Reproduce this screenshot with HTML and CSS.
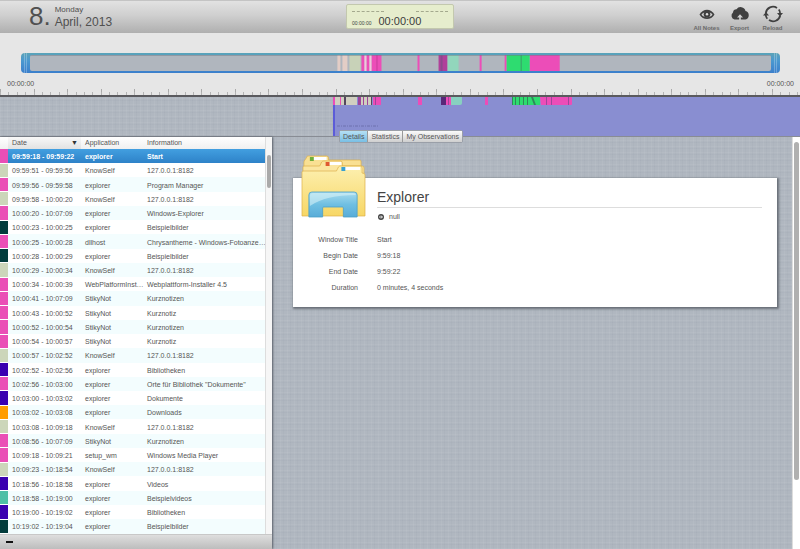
FILE: index.html
```html
<!DOCTYPE html>
<html lang="en">
<head>
<meta charset="utf-8">
<title>KnowSelf</title>
<link rel="stylesheet" href="styles.css">
</head>
<body>
<header class="topbar">
  <div class="date">
    <span class="day">8.</span>
    <div class="date-text"><span class="weekday">Monday</span><span class="month">April, 2013</span></div>
  </div>
  <div class="clock">
    <div class="dashes"><i></i><i></i></div>
    <div class="times"><small>00:00:00</small><span>00:00:00</span></div>
  </div>
  <nav class="actions">
    <button type="button">
      <svg viewBox="0 0 20 20"><path d="M2.500 10.500C6 4 14 4 17.500 10.500C14 16.500 6 16.500 2.500 10.500Z" fill="#404040"/><path d="M4.500 10.500C6.500 7 13.500 7 15.500 10.500C13.500 14 6.500 14 4.500 10.500Z" fill="#d2d2d2"/><circle cx="10" cy="10.300" r="3.300" fill="#404040"/><circle cx="10" cy="10.300" r="1.200" fill="#ddd"/></svg>
      All Notes
    </button>
    <button type="button">
      <svg viewBox="0 0 20 20"><path d="M4.500 15.500A4 4 0 0 1 3 8.500A3.600 3.600 0 0 1 6.500 5.300A5 5 0 0 1 15.500 7A4.400 4.400 0 0 1 15.500 15.500Z" fill="#404040"/><path d="M9.200 16V13.500H7L10 10.300L13 13.500H10.800V16Z" fill="#d0d0d0"/></svg>
      Export
    </button>
    <button type="button">
      <svg viewBox="0 0 20 20"><g fill="none" stroke="#404040" stroke-width="1.800"><path d="M2.800 9A7.300 7.300 0 0 1 14 3.900"/><path d="M15.800 5.500A7.300 7.300 0 0 1 17.200 10"/><path d="M17.200 11.500A7.300 7.300 0 0 1 6 16.100"/><path d="M4.300 14.700A7.300 7.300 0 0 1 2.700 11"/></g><path d="M14 9H20L17 12.500ZM0 11.500H6L3 8Z" fill="#404040"/></svg>
      Reload
    </button>
  </nav>
</header>

<section class="range">
  <div class="range-bar">
    <svg viewBox="0 0 740 16" preserveAspectRatio="none">
      <path fill="#e3cdc6" d="M307 0h3v16h-3zM312 0h5v16h-5z"/>
      <path fill="#c8d2b8" d="M319 0h11v16h-11z"/>
      <path fill="#ec4db8" d="M331 0h3v16h-3zM336 0h3v16h-3zM341 0h10v16h-10zM387 0h2v16h-2zM449 0h2v16h-2zM474 0h2v16h-2zM499 0h30v16h-30z"/>
      <path fill="#f0c6dc" d="M334 0h2v16h-2zM339 0h2v16h-2z"/>
      <path fill="#b0409a" d="M408 0h9v16h-9z"/>
      <path fill="#8a4a8c" d="M410 0h2v16h-2z"/>
      <path fill="#c73c9c" d="M346 0h1v16h-1z"/>
      <path fill="#92d6bc" d="M417 0h11v16h-11z"/>
      <path fill="#2edc70" d="M476 0h23v16h-23z"/>
      <path fill="#3c9c68" d="M490 0h1v16h-1z"/>
      <path fill="#6c7480" opacity=".45" d="M0 0h740v1h-740z"/>
    </svg>
  </div>
  <div class="range-labels"><span>00:00:00</span><span>00:00:00</span></div>
  <svg class="ticks" viewBox="0 0 800 7" preserveAspectRatio="none" shape-rendering="crispEdges">
    <path d="M0 3.500H800" stroke="#aaa" stroke-width="7" stroke-dasharray="1 32.560"/>
    <path d="M0 5H800" stroke="#b4b4b4" stroke-width="4" stroke-dasharray="1 7.390"/>
  </svg>
</section>

<section class="track">
  <svg viewBox="0 0 800 39" preserveAspectRatio="none">
    <path fill="#898ed1" d="M333 0h467v39h-467z"/>
    <path fill="#5c5cd8" d="M333 0h2v39h-2z"/>
    <path fill="#d0cfc0" d="M335 0h5v8h-5zM341 0h3v8h-3zM346 0h11v8h-11zM361 0h11v8h-11z"/>
    <path fill="#ec4db8" d="M333 0h2v8h-2zM340 0h1v8h-1zM373 0h8v8h-8zM418 0h4v8h-4zM446 0h5v8h-5zM485 0h3v8h-3zM540 0h32v7q0 1-1 1h-30z"/>
    <path fill="#a0449c" d="M358 0h3v8h-3zM363 0h1v8h-1zM367 0h1v8h-1zM375 0h1v8h-1zM448 0h1v8h-1zM546 0h1v8h-1zM551 0h1v8h-1zM568 0h1v8h-1z"/>
    <path fill="#55455f" d="M344 0h2v8h-2zM371 0h1v8h-1z"/>
    <path fill="#582878" d="M441 0h5v8h-5z"/>
    <path fill="#88d0c0" d="M451 0h11v6q0 2-2 2h-9z"/>
    <path fill="#2edc70" d="M512 0h28v8h-28z"/>
    <path fill="#30885a" d="M512 0h1v8h-1zM515 0h1v8h-1zM519 0h1v8h-1zM523 0h1v8h-1zM527 0h1v8h-1zM531 0h2l3 8h-2z"/>
    <path d="M337 29H378" stroke="#6c70ae" stroke-dasharray="3 1 1 1"/>
  </svg>
</section>

<main class="content">
  <section class="list">
    <div class="list-body">
      <table>
        <colgroup><col class="c-color"><col class="c-date"><col class="c-app"><col></colgroup>
        <thead><tr><th></th><th class="sorted">Date <span>▼</span></th><th>Application</th><th>Information</th></tr></thead>
        <tbody>
          <tr class="selected"><td class="pink"></td><td>09:59:18 - 09:59:22</td><td>explorer</td><td>Start</td></tr>
          <tr><td class="sage"></td><td>09:59:51 - 09:59:56</td><td>KnowSelf</td><td>127.0.0.1:8182</td></tr>
          <tr><td class="pink"></td><td>09:59:56 - 09:59:58</td><td>explorer</td><td>Program Manager</td></tr>
          <tr><td class="sage"></td><td>09:59:58 - 10:00:20</td><td>KnowSelf</td><td>127.0.0.1:8182</td></tr>
          <tr><td class="pink"></td><td>10:00:20 - 10:07:09</td><td>explorer</td><td>Windows-Explorer</td></tr>
          <tr><td class="dark"></td><td>10:00:23 - 10:00:25</td><td>explorer</td><td>Beispielbilder</td></tr>
          <tr><td class="pink"></td><td>10:00:25 - 10:00:28</td><td>dllhost</td><td>Chrysantheme - Windows-Fotoanze…</td></tr>
          <tr><td class="dark"></td><td>10:00:28 - 10:00:29</td><td>explorer</td><td>Beispielbilder</td></tr>
          <tr><td class="sage"></td><td>10:00:29 - 10:00:34</td><td>KnowSelf</td><td>127.0.0.1:8182</td></tr>
          <tr><td class="pink"></td><td>10:00:34 - 10:00:39</td><td>WebPlatformInst…</td><td>Webplattform-Installer 4.5</td></tr>
          <tr><td class="pink"></td><td>10:00:41 - 10:07:09</td><td>StikyNot</td><td>Kurznotizen</td></tr>
          <tr><td class="pink"></td><td>10:00:43 - 10:00:52</td><td>StikyNot</td><td>Kurznotiz</td></tr>
          <tr><td class="pink"></td><td>10:00:52 - 10:00:54</td><td>StikyNot</td><td>Kurznotizen</td></tr>
          <tr><td class="pink"></td><td>10:00:54 - 10:00:57</td><td>StikyNot</td><td>Kurznotiz</td></tr>
          <tr><td class="sage"></td><td>10:00:57 - 10:02:52</td><td>KnowSelf</td><td>127.0.0.1:8182</td></tr>
          <tr><td class="indigo"></td><td>10:02:52 - 10:02:56</td><td>explorer</td><td>Bibliotheken</td></tr>
          <tr><td class="pink"></td><td>10:02:56 - 10:03:00</td><td>explorer</td><td>Orte für Bibliothek "Dokumente"</td></tr>
          <tr><td class="indigo"></td><td>10:03:00 - 10:03:02</td><td>explorer</td><td>Dokumente</td></tr>
          <tr><td class="orange"></td><td>10:03:02 - 10:03:08</td><td>explorer</td><td>Downloads</td></tr>
          <tr><td class="sage"></td><td>10:03:08 - 10:09:18</td><td>KnowSelf</td><td>127.0.0.1:8182</td></tr>
          <tr><td class="pink"></td><td>10:08:56 - 10:07:09</td><td>StikyNot</td><td>Kurznotizen</td></tr>
          <tr><td class="pink"></td><td>10:09:18 - 10:09:21</td><td>setup_wm</td><td>Windows Media Player</td></tr>
          <tr><td class="sage"></td><td>10:09:23 - 10:18:54</td><td>KnowSelf</td><td>127.0.0.1:8182</td></tr>
          <tr><td class="indigo"></td><td>10:18:56 - 10:18:58</td><td>explorer</td><td>Videos</td></tr>
          <tr><td class="teal"></td><td>10:18:58 - 10:19:00</td><td>explorer</td><td>Beispielvideos</td></tr>
          <tr><td class="indigo"></td><td>10:19:00 - 10:19:02</td><td>explorer</td><td>Bibliotheken</td></tr>
          <tr><td class="dark"></td><td>10:19:02 - 10:19:04</td><td>explorer</td><td>Beispielbilder</td></tr>
        </tbody>
      </table>
      <div class="scroll"><div class="thumb"></div></div>
    </div>
    <footer class="list-foot"><button type="button" aria-label="Collapse"><i></i></button></footer>
  </section>

  <section class="detail">
    <nav class="tabs">
      <button type="button" class="active">Details</button><button type="button">Statistics</button><button type="button">My Observations</button>
    </nav>
    <div class="detail-body">
      <article class="card">
        <svg class="folder" viewBox="0 0 66 64" preserveAspectRatio="none">
          <defs>
            <linearGradient id="gold" x1="0" y1="0" x2="0" y2="1"><stop offset="0" stop-color="#fdf0b0"/><stop offset="1" stop-color="#f7d765"/></linearGradient>
            <linearGradient id="blue" x1="0" y1="0" x2="0" y2="1"><stop offset="0" stop-color="#a9dcee"/><stop offset=".5" stop-color="#6fbfe2"/><stop offset="1" stop-color="#58acd8"/></linearGradient>
          </defs>
          <g stroke="#dcb04a" stroke-width=".700">
            <path fill="#f9e093" d="M3 60V7q0-1 1-2l2-3q0-1 1-1h19q2 0 2 2v2h32q1 0 1 2v53z"/>
            <path fill="#fbe6a0" d="M2 60V12q0-1 2-1h15l2-4q1-1 2-1h17q2 0 2 2v3h20q2 0 2 2v47z"/>
            <path fill="url(#gold)" d="M1 61V17q0-1 2-1h33l2-4q1-1 2-1h20q2 0 2 2v5q3 0 3 2v41z"/>
          </g>
          <path fill="#fff" d="M12 2h14v3h-14zM28 7h13v3h-13zM44 12h16v3h-16z"/>
          <path fill="#6fae3a" d="M9 2h4v4h-4z"/><path fill="#df5a30" d="M25 7h4v4h-4z"/><path fill="#3aa0d0" d="M41 12h4v4h-4z"/>
          <path fill="url(#blue)" stroke="#4a9fc8" stroke-width=".800" d="M8 62V40q0-3 3-3h43q3 0 3 3v22h-14v-9q0-1-1-1H23q-1 0-1 1v9z"/>
          <path fill="#d4f0f6" opacity=".6" d="M9 41q0-3 3-3h41q2 0 3 2Q25 40 9 51z"/>
        </svg>
        <div class="card-main">
          <h1>Explorer</h1>
          <p class="path"><svg viewBox="0 0 8 8"><circle cx="4" cy="4" r="3" fill="#444"/><path d="M2 4h3M4 2.500L5.500 4L4 5.500" fill="none" stroke="#fff" stroke-width=".900"/></svg>null</p>
        </div>
        <dl>
          <dt>Window Title</dt><dd>Start</dd>
          <dt>Begin Date</dt><dd>9:59:18</dd>
          <dt>End Date</dt><dd>9:59:22</dd>
          <dt>Duration</dt><dd>0 minutes, 4 seconds</dd>
        </dl>
      </article>
    </div>
    <div class="scroll scroll-main"><div class="thumb"></div></div>
  </section>
</main>
</body>
</html>
```
FILE: styles.css
```css
* { box-sizing: border-box; }

body {
  margin: 0;
  height: 100vh;
  display: flex;
  flex-direction: column;
  overflow: hidden;
  font: 7px/10px "Liberation Sans", Arial, sans-serif;
  color: #555;
  background-color: #b0b7c0;
  background-image:
    repeating-linear-gradient(90deg, rgba(255, 255, 255, .05) 0 1px, transparent 1px 3px, rgba(70, 80, 100, .03) 3px 4px, transparent 4px 7px),
    repeating-linear-gradient(0deg, rgba(255, 255, 255, .05) 0 1px, transparent 1px 4px, rgba(70, 80, 100, .03) 4px 5px, transparent 5px 6px);
}

button {
  font: inherit;
  color: inherit;
  padding: 0;
  border: 0;
  background: none;
}

.topbar {
  flex: none;
  height: 33px;
  display: grid;
  grid-template-columns: 1fr 108px 1fr;
  align-items: start;
  border-top: 1px solid #c4c4c4;
  background: linear-gradient(#e2e2e2, #cfcfcf 45%, #afafaf);
}

.date { display: flex; gap: 4px; padding-left: 29px; color: #505050; }
.day { font-size: 26px; line-height: 30px; }
.date-text { display: flex; flex-direction: column; padding-top: 4px; }
.weekday { font-size: 8px; line-height: 10px; }
.month { font-size: 12px; line-height: 14px; }

.clock {
  height: 25px;
  margin-top: 3px;
  padding: 6px 5px 0;
  border: 1px solid #c3c8ae;
  border-radius: 2px;
  background: #e6edcd;
  color: #3c3c3c;
}
.dashes { display: flex; justify-content: space-between; }
.dashes i { width: 32px; border-top: 1px dashed #a4a98e; }
.times { display: flex; align-items: baseline; gap: 7px; font-size: 11px; line-height: 19px; }
.times small { font-size: 5px; }

.actions { display: flex; justify-content: flex-end; padding: 3px 11px 0 0; }
.actions button {
  width: 33px;
  display: flex;
  flex-direction: column;
  align-items: center;
  font-size: 6px;
  font-weight: bold;
  line-height: 8px;
  color: #6a6a6a;
  white-space: nowrap;
}
.actions svg { width: 20px; height: 20px; }

.range {
  flex: none;
  height: 64px;
  display: flex;
  flex-direction: column;
  padding-top: 20px;
  background: #e6e6e6;
  border-bottom: 2px solid #5a5a5e;
}
.range-bar {
  height: 20px;
  margin: 0 20px 0 21px;
  padding: 2px 9px;
  border-radius: 4px;
  background:
    linear-gradient(90deg, transparent 3px, rgba(255, 255, 255, .25) 3px 4px, transparent 4px 5px, rgba(255, 255, 255, .25) 5px 6px, transparent 6px) left / 9px 100% no-repeat,
    linear-gradient(90deg, transparent 3px, rgba(255, 255, 255, .25) 3px 4px, transparent 4px 5px, rgba(255, 255, 255, .25) 5px 6px, transparent 6px) right / 9px 100% no-repeat,
    linear-gradient(#5ba3b8, #4a98d0 40%, #3b7fcb);
}
.range-bar svg {
  display: block;
  width: 100%;
  height: 16px;
  border-radius: 2px;
  background: #b0b6be;
}
.range-labels { display: flex; justify-content: space-between; padding: 6px 6px 0 7px; }
.ticks { display: block; width: 100%; height: 7px; margin-top: auto; }

.track { flex: none; height: 40px; border-bottom: 1px solid #888c94; }
.track svg { display: block; width: 100%; height: 39px; }

.content { flex: 1; min-height: 0; display: grid; grid-template-columns: 34% 1fr; }

.list {
  min-height: 0;
  display: flex;
  flex-direction: column;
  background: #fff;
  box-shadow: 1px 0 2px #555c66;
}
.list-body { flex: 1; min-height: 0; display: grid; grid-template-columns: 1fr 7px; }
table { width: 100%; height: 100%; table-layout: fixed; border-collapse: collapse; }
.c-color { width: 8px; }
.c-date { width: 73px; }
.c-app { width: 62px; }
th, td {
  padding: 0 0 0 4px;
  text-align: left;
  line-height: 10px;
  white-space: nowrap;
}
td { padding-top: 2px; }
th { height: 12px; font-weight: normal; background: linear-gradient(#fff, #f0f0f0); }
th.sorted { padding-right: 3px; background: linear-gradient(#f8f8f8, #e2e2e2); }
th span { float: right; color: #333; }
tbody tr:nth-child(odd) { background: #f3fdfe; }
tbody td:first-child { border-bottom: 1px solid #fff; }
tbody tr.selected { background: linear-gradient(#429fe0, #2e82c8); color: #fff; font-weight: bold; }
.pink { background: #ea4fb6; }
.sage { background: #ccd6ba; }
.dark { background: #023c3c; }
.indigo { background: #3a00b0; }
.orange { background: #ff9d00; }
.teal { background: #4fbfa6; }

.scroll { padding: 18px 1px 0; background: #f6f6f6; border-left: 1px solid #ddd; }
.thumb { height: 33px; border-radius: 3px; background: #aaa; }

.list-foot {
  flex: none;
  height: 15px;
  padding: 0 6px;
  border-top: 1px solid #c8c8c8;
  background: linear-gradient(#dedede, #bdbdbd);
}
.list-foot button { display: block; height: 14px; }
.list-foot i { display: block; width: 7px; height: 2px; background: #111; }

.detail { position: relative; display: grid; grid-template-columns: 1fr 8px; }
.tabs {
  position: absolute;
  top: -7px;
  left: 67px;
  display: flex;
  border: 1px solid #9a9fa8;
  border-radius: 2px;
}
.tabs button {
  height: 11px;
  padding: 0 3px;
  line-height: 11px;
  background: linear-gradient(#fafafa, #cfcfcf);
}
.tabs button + button { border-left: 1px solid #999; }
.tabs .active { background: linear-gradient(#b5e0f5, #79bfe4); }

.detail-body { padding: 41px 15px 0 21px; }
.card {
  display: grid;
  grid-template-columns: 65px 1fr;
  column-gap: 19px;
  align-content: start;
  min-height: 129px;
  background: #fff;
  box-shadow: 1px 1px 2px 1px #6a7078;
}
.folder { width: 65px; height: 64px; margin: -23px 0 0 8px; }
.card-main { padding-right: 15px; }
h1 {
  margin: 10px 0 0;
  padding-bottom: 1px;
  font-size: 14px;
  line-height: 18px;
  font-weight: normal;
  color: #444;
  border-bottom: 1px solid #ddd;
}
.path { display: flex; align-items: center; gap: 4px; margin: 4px 0 0; }
.path svg { width: 8px; height: 8px; }
dl {
  grid-column: 1 / -1;
  display: grid;
  grid-template-columns: subgrid;
  row-gap: 6px;
  margin: 13px 0 0;
}
dt { text-align: right; }
dd { margin: 0; }

.scroll-main { padding: 5px 1px 0; background: #fff; }
.scroll-main .thumb { height: 83%; background: #b0b0b0; }
```
